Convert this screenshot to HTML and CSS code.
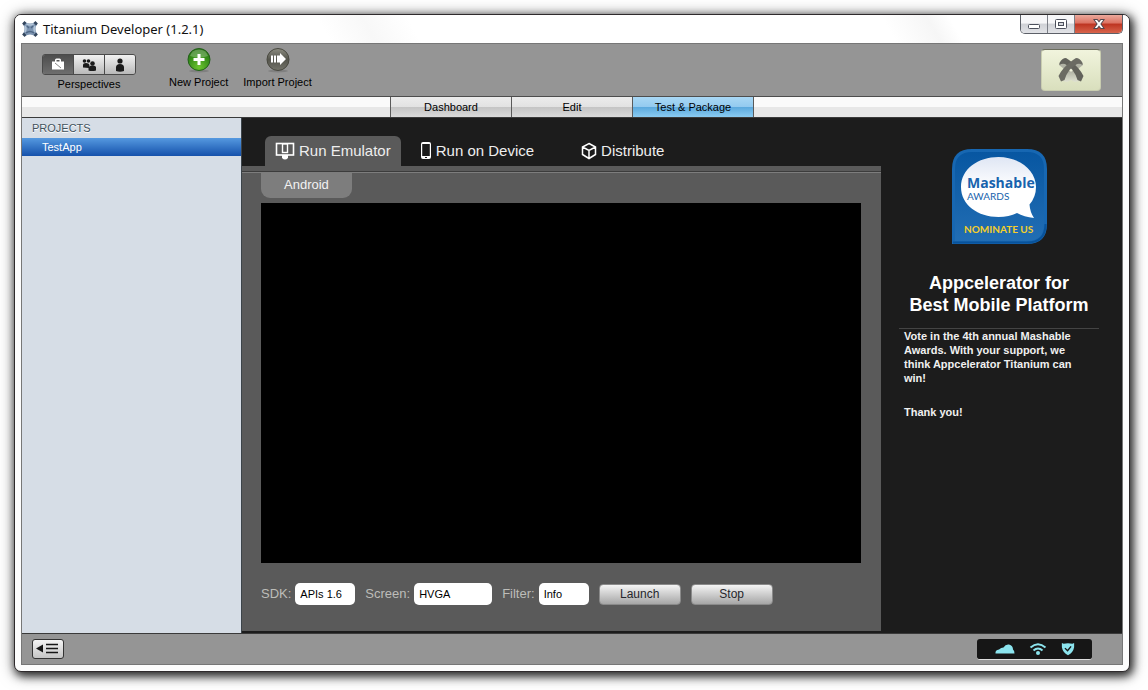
FILE: index.html
```html
<!DOCTYPE html>
<html lang="en">
<head>
<meta charset="utf-8">
<title>Titanium Developer (1.2.1)</title>
<link rel="stylesheet" href="styles.css">
</head>
<body>
<div class="window">
  <header class="titlebar">
    <svg class="app-icon" width="16" height="16" viewBox="0 0 16 16" aria-hidden="true">
      <path d="M3 1Q8 4 13 1l2 2Q12 8 15 13l-2 2Q8 12 3 15l-2-2Q4 8 1 3z" fill="#7d95b2"/>
      <path d="M1 3.500L3.500 1M12.500 1L15 3.500M1 12.500L3.500 15M12.500 15L15 12.500" stroke="#33455c" stroke-width="2.500"/>
      <path d="M4.500 3Q8 5 11.500 3M3 5Q5 8 3 11M13 5Q11 8 13 11" fill="none" stroke="#b3c5d8" stroke-width="1.500"/>
      <path d="M4 12Q8 9 12 12M5 5l2 2M11 5L9 7" fill="none" stroke="#4f6785" stroke-width="1.500"/>
    </svg>
    <h1 class="title">Titanium Developer (1.2.1)</h1>
    <div class="window-buttons">
      <button class="win-btn" type="button" aria-label="Minimize">
        <svg width="12" height="12" viewBox="0 0 12 12"><rect x=".5" y="6.500" width="11" height="4" rx="1" fill="#fff" stroke="#4c505c"/></svg>
      </button>
      <button class="win-btn" type="button" aria-label="Maximize">
        <svg width="12" height="12" viewBox="0 0 12 12"><rect x=".5" y="1.500" width="11" height="9" rx="1" fill="#fff" stroke="#4c505c"/><rect x="3.500" y="4.500" width="5" height="3" fill="#d5d7dc" stroke="#4c505c"/></svg>
      </button>
      <button class="win-btn win-close" type="button" aria-label="Close">
        <svg width="12" height="12" viewBox="0 0 12 12"><path d="M0 1h4.500L6 3l1.500-2H12L8.500 6 12 11H7.500L6 9l-1.500 2H0l3.500-5z" fill="#54484f"/><path d="M1.800 2h2.200l2 2.600L8 2h2.200L7.300 6l2.900 4H8L6 7.400 4 10H1.800l2.900-4z" fill="#fff"/></svg>
      </button>
    </div>
  </header>

  <div class="client">
    <div class="toolbar">
      <div class="perspectives">
        <div class="segmented" role="group" aria-labelledby="perspectives-label">
          <button class="segment segment-active" type="button" aria-label="Projects">
            <svg width="14" height="14" viewBox="0 0 14 14"><path d="M1 3.500h3V2Q4 .5 5.500 .5h3Q10 .5 10 2v1.500h3v8H1zM5.500 3.500h3V2h-3z" fill="#fff"/><path d="M4 5l6 5" stroke="#888"/></svg>
          </button>
          <button class="segment" type="button" aria-label="Community">
            <svg width="16" height="14" viewBox="0 0 16 14"><g fill="#1b1b1b"><circle cx="3.500" cy="3" r="1.800"/><circle cx="7.500" cy="3" r="1.800"/><path d="M2 9.500V7Q2 5 5 5t3.500 2L8 10z"/><circle cx="11.500" cy="5.500" r="2.300"/><path d="M7.500 12.500V10Q7.500 7.500 11.500 7.500T15 10v2.500q-4 1-7.500 0z"/></g></svg>
          </button>
          <button class="segment" type="button" aria-label="Account">
            <svg width="14" height="14" viewBox="0 0 14 14"><circle cx="7" cy="3" r="2.600" fill="#1b1b1b"/><path d="M3 13V9.500Q3 6 7 6t4 3.500V13q-4 1.500-8 0z" fill="#1b1b1b"/></svg>
          </button>
        </div>
        <span class="tool-label" id="perspectives-label">Perspectives</span>
      </div>

      <button class="tool" type="button">
        <svg width="26" height="26" viewBox="0 0 26 26" aria-hidden="true">
          <defs><radialGradient id="green" cx=".5" cy=".85" r=".9"><stop offset="0" stop-color="#6cc42f"/><stop offset=".6" stop-color="#358c19"/><stop offset="1" stop-color="#246a12"/></radialGradient></defs>
          <ellipse cx="13" cy="24" rx="10" ry="1.500" fill="#808080"/>
          <circle cx="13" cy="12.500" r="11" fill="url(#green)" stroke="#22601a"/>
          <path d="M4 9Q6 2.500 13 2.500T22 9Q13 12 4 9z" fill="#fff" opacity=".25"/>
          <path d="M13 7v11M7.500 12.500h11" stroke="#fff" stroke-width="3"/>
        </svg>
        <span class="tool-label">New Project</span>
      </button>
      <button class="tool" type="button">
        <svg width="26" height="26" viewBox="0 0 26 26" aria-hidden="true">
          <defs><linearGradient id="stone" x2="0" y2="1"><stop offset="0" stop-color="#8c8c80"/><stop offset=".5" stop-color="#55554d"/><stop offset="1" stop-color="#74746a"/></linearGradient></defs>
          <ellipse cx="13" cy="24" rx="10" ry="1.500" fill="#808080"/>
          <circle cx="13" cy="12.500" r="11" fill="url(#stone)" stroke="#48483f"/>
          <path d="M7 8.500v7M10 8.500v7" stroke="#fff" stroke-width="2"/>
          <path d="M12 8.500h3V6l6 6-6 6v-2.500h-3z" fill="#fff"/>
        </svg>
        <span class="tool-label">Import Project</span>
      </button>

      <button class="brand" type="button" aria-label="Appcelerator">
        <svg width="28" height="28" viewBox="0 0 28 28">
          <defs><linearGradient id="petal" x2="0" y2="1"><stop offset="0" stop-color="#a2a396"/><stop offset="1" stop-color="#e0e2d2"/></linearGradient></defs>
          <path d="M3 6l6-2 3 5-5 4-5-4zM25 6l-6-2-3 5 5 4 5-4z" fill="#b0b2a4"/>
          <path d="M14 12L21 18l1 7-4 1-4-2-4 2-4-1 1-7z" fill="url(#petal)"/>
          <path d="M2.500 7Q5 2 9 2L12 4Q22 11 26.500 20L24 25.500L20.500 24Q18 14 8 8Q5 7 2.500 9z" fill="#62625b"/>
          <path d="M25.500 7Q23 2 19 2L16 4Q6 11 1.500 20L4 25.500L7.500 24Q10 14 20 8Q23 7 25.500 9z" fill="#6b6b63"/>
          <path d="M14 12.500l1.800 1.800L14 16l-1.800-1.700z" fill="#f0f2dc"/>
        </svg>
      </button>
    </div>

    <nav class="view-tabs" aria-label="Views">
      <button class="view-tab" type="button">Dashboard</button>
      <button class="view-tab" type="button">Edit</button>
      <button class="view-tab view-tab-active" type="button">Test &amp; Package</button>
    </nav>

    <div class="workspace">
      <aside class="sidebar">
        <h2 class="sidebar-heading">PROJECTS</h2>
        <a class="project" href="#">TestApp</a>
      </aside>

      <main class="content">
        <div class="mode-tabs">
          <button class="mode-tab mode-tab-active" type="button">
            <svg width="20" height="20" viewBox="0 0 20 20" aria-hidden="true"><rect x="1.500" y="2.500" width="17" height="11.500" fill="none" stroke="#fff" stroke-width="1.600"/><rect x="7.500" y="3" width="5" height="8.500" fill="#5a5a5a" stroke="#fff" stroke-width="1.400"/><path d="M7 14h6v3q-3 3-6 0z" fill="#fff"/></svg>
            Run Emulator
          </button>
          <button class="mode-tab" type="button">
            <svg width="12" height="20" viewBox="0 0 12 20" aria-hidden="true"><path fill-rule="evenodd" d="M3 1h6q2 0 2 2v13q0 2-2 2H3q-2 0-2-2V3q0-2 2-2zM2.200 3v12h7.600V3zM5 16v1h2v-1z" fill="#fff"/></svg>
            Run on Device
          </button>
          <button class="mode-tab mode-tab-wide" type="button">
            <svg width="16" height="18" viewBox="0 0 16 18" aria-hidden="true"><path d="M8 1.500L14.500 5v7.500L8 16.500 1.500 12.500V5zM1.500 5L8 8.500 14.500 5M8 8.500v8" fill="none" stroke="#fff" stroke-width="1.500"/></svg>
            Distribute
          </button>
        </div>

        <section class="panel">
          <button class="platform" type="button">Android</button>
          <div class="console"></div>
          <form class="controls">
            <label class="field">SDK:
              <select class="select select-sdk"><option>APIs 1.6</option></select>
            </label>
            <label class="field">Screen:
              <select class="select select-screen"><option>HVGA</option></select>
            </label>
            <label class="field">Filter:
              <select class="select select-filter"><option>Info</option></select>
            </label>
            <button class="action" type="button">Launch</button>
            <button class="action" type="button">Stop</button>
          </form>
        </section>
      </main>

      <aside class="promo">
        <svg class="badge" width="95" height="95" viewBox="0 0 95 95" role="img" aria-label="Mashable Awards, nominate us">
          <defs>
            <linearGradient id="badge-fill" x2="0" y2="1"><stop offset="0" stop-color="#0756a1"/><stop offset="1" stop-color="#226eb4"/></linearGradient>
            <linearGradient id="bubble" x2="0" y2="1"><stop offset="0" stop-color="#dfe6f4"/><stop offset=".5" stop-color="#fff"/></linearGradient>
          </defs>
          <path d="M20 1.500H75Q93.500 1.500 93.500 20V75Q93.500 93.500 75 93.500H1.500V20Q1.500 1.500 20 1.500z" fill="url(#badge-fill)" stroke="#1767b2" stroke-width="3"/>
          <path d="M1 93.500h74Q93.500 93.500 93.500 75" fill="none" stroke="#08529a" stroke-width="2"/>
          <path d="M46.500 8C67 8 84 21 84 38Q84 48 77.500 55.500Q78 63 82 69Q72 68 65 64Q57 68 46.500 68C26 68 9 56 9 38S26 8 46.500 8z" fill="url(#bubble)"/>
          <text class="badge-name" x="15" y="39">Mashable</text>
          <text class="badge-sub" x="15" y="51">AWARDS</text>
          <text class="badge-cta" x="12" y="84">NOMINATE US</text>
        </svg>
        <h2 class="promo-heading">Appcelerator for<br>Best Mobile Platform</h2>
        <div class="promo-text">
          <p>Vote in the 4th annual Mashable Awards. With your support, we think Appcelerator Titanium can win!</p>
          <p>Thank you!</p>
        </div>
      </aside>
    </div>

    <footer class="statusbar">
      <button class="collapse" type="button" aria-label="Toggle project list">
        <svg width="26" height="14" viewBox="0 0 26 14"><path d="M1 6.500L8 2.500v8z" fill="#161616"/><path d="M11 2.500h12M11 6.500h12M11 10.500h12" stroke="#161616" stroke-width="1.500"/></svg>
      </button>
      <div class="indicators">
        <svg width="20" height="12" viewBox="0 0 20 12" role="img" aria-label="Cloud"><path d="M.5 10.500Q0 7 4 6.500Q6 4.500 8.500 4.500Q10.500 1 14 1.500q4 1 4 5 1.500 1 1.500 4z" fill="#8ce4ee"/></svg>
        <svg width="18" height="14" viewBox="0 0 18 14" role="img" aria-label="Network"><path d="M1.500 5.500Q9-1 16.500 5.500M4.500 8.500q4.500-4 9 0" fill="none" stroke="#8ce4ee" stroke-width="2"/><circle cx="9" cy="11" r="2" fill="#8ce4ee"/></svg>
        <svg width="14" height="14" viewBox="0 0 16 16" role="img" aria-label="Security"><path d="M1 1l2 1 5-.5L13 2l2-1v5q-1 6-7 9Q2 12 1 6z" fill="#8ce4ee"/><path d="M4.500 7l3 3 4-5" fill="none" stroke="#161616" stroke-width="1.600"/></svg>
      </div>
    </footer>
  </div>
</div>
</body>
</html>
```

FILE: styles.css
```css
* {
  box-sizing: border-box;
}

body {
  margin: 0;
  padding: 14px 18px 18px 14px;
  min-height: 100vh;
  display: flex;
  background: #fff;
  font: 11px/14px "Liberation Sans", Arial, sans-serif;
  color: #000;
}

h1, h2, p {
  margin: 0;
}

button {
  margin: 0;
  padding: 0;
  border: 0;
  background: none;
  color: inherit;
  font: inherit;
}

svg {
  display: block;
}

.window {
  flex: 1;
  display: flex;
  flex-direction: column;
  border: 1px solid #2e2a2c;
  border-radius: 7px;
  background: #fdfdfd;
  box-shadow: 2px 3px 8px 1px rgba(0, 0, 0, .75), 1px 2px 16px rgba(0, 0, 0, .5);
}

/* Title bar */
.titlebar {
  display: flex;
  align-items: center;
  height: 28px;
  padding: 0 6px 0 7px;
  border-radius: 6px 6px 0 0;
  background: linear-gradient(60deg, #fff 28%, #f8f8f8 32%, #fff 36%, #fff 78%, #f6f6f6 82%, #fff 84%);
}

.title {
  flex: 1;
  padding-left: 5px;
  font: 13px/20px "Noto Sans", sans-serif;
  color: #111;
}

.window-buttons {
  display: flex;
  align-self: flex-start;
  border: 1px solid #5c6068;
  border-top: 0;
  border-radius: 0 0 5px 5px;
  overflow: hidden;
}

.win-btn {
  display: flex;
  align-items: center;
  justify-content: center;
  width: 27px;
  height: 18px;
  border-right: 1px solid #7b7e86;
  background: linear-gradient(#f6f6f8 45%, #cfd1d6 50%, #e2e3e7);
}

.win-close {
  width: 47px;
  border-right: 0;
  background: linear-gradient(#eba99c, #dc7262 45%, #bd3421 50%, #d8644c);
}

/* Client area */
.client {
  flex: 1;
  display: flex;
  flex-direction: column;
  margin: 0 6px 6px;
  border: 1px solid #777;
}

.toolbar {
  display: flex;
  align-items: flex-start;
  padding: 3px 21px 5px 20px;
  border-bottom: 1px solid #4d4d4d;
  background: #959595;
}

.perspectives {
  display: flex;
  flex-direction: column;
  align-items: center;
  gap: 2px;
  margin-right: 33px;
  padding-top: 7px;
}

.segmented {
  display: flex;
  border: 1px solid #4a4a4a;
  border-radius: 3px;
  overflow: hidden;
}

.segment {
  display: flex;
  align-items: center;
  justify-content: center;
  width: 31px;
  height: 19px;
  border-left: 1px solid #4a4a4a;
  background: linear-gradient(#f2f2f2, #b9b9b9);
}

.segment-active {
  width: 30px;
  border-left: 0;
  background: linear-gradient(#4d4d4d, #6e6e6e);
}

.tool {
  display: flex;
  flex-direction: column;
  align-items: center;
  gap: 2px;
  margin-right: 15px;
}

.tool-label {
  white-space: nowrap;
}

.brand {
  display: flex;
  align-items: center;
  justify-content: center;
  width: 60px;
  height: 42px;
  margin: 2px 0 0 auto;
  border: 1px solid #c9cdb0;
  border-top-color: #6d6e5e;
  border-radius: 4px;
  background: linear-gradient(#f1f4dd, #d9dfbd);
}

.view-tabs {
  display: flex;
  justify-content: center;
  border-bottom: 1px solid #3a3a3a;
  background: linear-gradient(#fafafa 50%, #e7e7e7 50%);
}

.view-tab {
  width: 121px;
  height: 20px;
  border-left: 1px solid #5a5a5a;
  background: linear-gradient(#ececec, #e2e2e2 49%, #c4c4c4 51%, #dadada);
}

.view-tab-active {
  width: 122px;
  border-right: 1px solid #5a5a5a;
  background: linear-gradient(#a9d8f5, #93caef 49%, #5ba9dd 51%, #8acbf2);
}

.workspace {
  flex: 1;
  display: flex;
  background: #1c1c1c;
}

/* Project list */
.sidebar {
  width: 220px;
  border-right: 1px solid #3c444a;
  background: #d6dde6;
}

.sidebar-heading {
  padding: 3px 10px;
  font: 11px/14px "Liberation Sans", Arial, sans-serif;
  color: #43525c;
  text-shadow: 0 1px 0 #fff;
}

.project {
  display: block;
  padding: 2px 20px;
  background: linear-gradient(#5599e0, #1551ab);
  color: #fff;
  text-decoration: none;
}

/* Emulator */
.content {
  flex: 1;
  display: flex;
  flex-direction: column;
  padding-bottom: 2px;
}

.mode-tabs {
  display: flex;
  padding: 18px 23px 0;
}

.mode-tab {
  display: flex;
  align-items: center;
  gap: 4px;
  height: 30px;
  padding: 0 10px;
  border-radius: 6px 6px 0 0;
  color: #eee;
  font-size: 15px;
  line-height: 20px;
}

.mode-tab + .mode-tab {
  margin-left: 9px;
}

.mode-tab + .mode-tab-wide {
  margin-left: 27px;
}

.mode-tab-active {
  background: #5a5a5a;
}

.panel {
  flex: 1;
  display: flex;
  flex-direction: column;
  padding: 0 20px 26px 19px;
  background: linear-gradient(#5a5a5a 5px, #3c3c3c 5px, #3c3c3c 6px, #7d7d7d 6px, #7d7d7d 7px, #5a5a5a 7px);
}

.platform {
  align-self: flex-start;
  height: 26px;
  margin: 6px 0 5px;
  padding: 0 23px;
  border-radius: 0 0 9px 9px;
  background: #7d7d7d;
  color: #f2f2f2;
  font-size: 13px;
}

.console {
  flex: 1;
  min-height: 200px;
  background: #000;
}

.controls {
  display: flex;
  align-items: center;
  gap: 10px;
  padding-top: 20px;
}

.field {
  display: flex;
  align-items: center;
  gap: 4px;
  color: #bdbdb9;
  font-size: 13px;
  line-height: 20px;
}

.select {
  height: 22px;
  margin: 0;
  padding: 0 5px;
  border: 0;
  border-radius: 5px;
  appearance: none;
  background: #fff;
  color: #000;
  font: 11px/22px "Liberation Sans", Arial, sans-serif;
}

.select-sdk {
  width: 60px;
}

.select-screen {
  width: 78px;
}

.select-filter {
  width: 50px;
}

.action {
  width: 82px;
  height: 21px;
  border: 1px solid #8a8a8a;
  border-radius: 4px;
  background: linear-gradient(#f4f4f4, #a6a6a6);
  color: #26262c;
  font-size: 12px;
}

/* Announcement */
.promo {
  width: 241px;
  padding: 31px 23px 20px 18px;
  color: #fff;
}

.badge {
  margin: 0 auto 28px;
}

.badge-name {
  font: bold 14px "Open Sans", sans-serif;
  fill: #1763ad;
}

.badge-sub {
  font: 10px Lato, sans-serif;
  fill: #1763ad;
}

.badge-cta {
  font: bold 10px Lato, sans-serif;
  fill: #f5cf2a;
}

.promo-heading {
  padding-bottom: 12px;
  border-bottom: 1px solid #444;
  font-size: 18px;
  line-height: 22px;
  text-align: center;
}

.promo-text {
  display: grid;
  gap: 20px;
  padding: 0 5px;
  color: #f0f0f0;
  font-weight: bold;
}

/* Status bar */
.statusbar {
  display: flex;
  align-items: flex-start;
  justify-content: space-between;
  padding: 5px 30px 4px 10px;
  border-top: 1px solid #3a3a3a;
  background: #959595;
}

.collapse {
  display: flex;
  align-items: center;
  justify-content: center;
  width: 32px;
  height: 20px;
  border: 1px solid #333;
  border-radius: 3px;
  background: linear-gradient(#f4f4f4, #c4c4c4);
}

.indicators {
  display: flex;
  align-items: center;
  justify-content: center;
  gap: 14px;
  width: 115px;
  height: 21px;
  border-bottom: 1px solid #ddd;
  border-radius: 3px;
  background: #161616;
}
```
